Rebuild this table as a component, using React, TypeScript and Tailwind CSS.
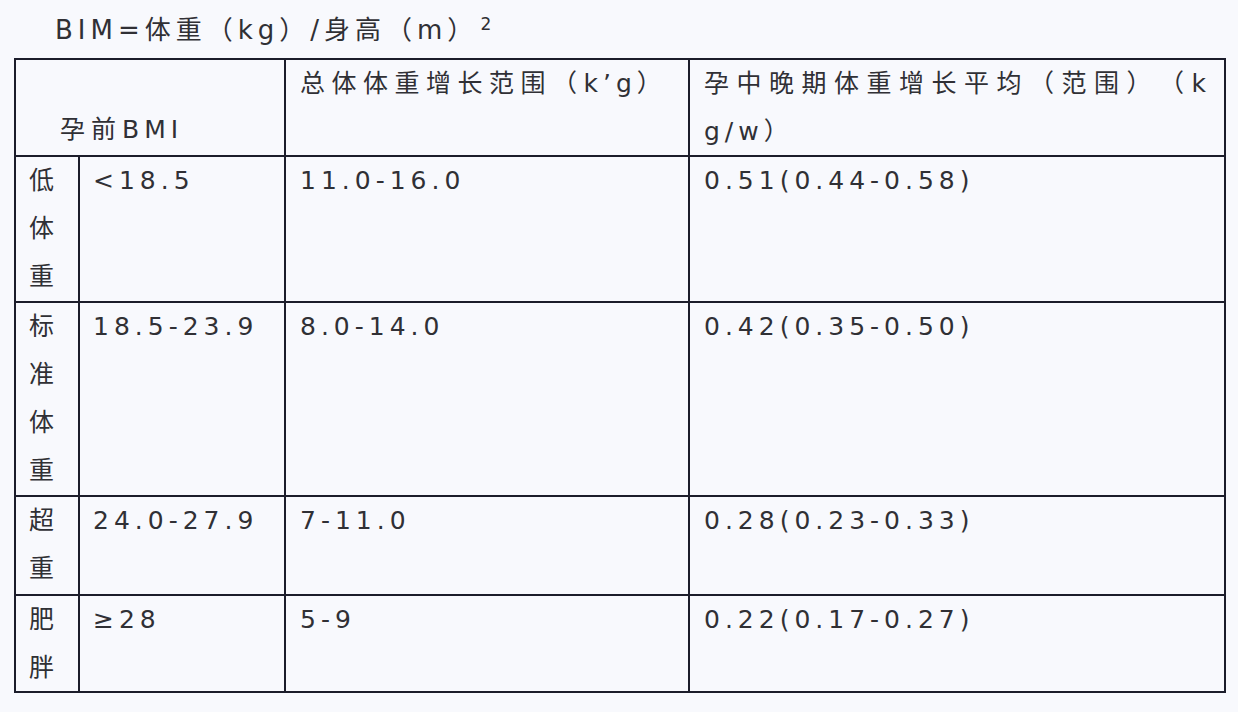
import React from 'react';

const rows = [
    { label: ['低', '体', '重'], bmi: '<18.5', total: '11.0-16.0', weekly: '0.51(0.44-0.58)', h: 'h-[144px]' },
    { label: ['标', '准', '体', '重'], bmi: '18.5-23.9', total: '8.0-14.0', weekly: '0.42(0.35-0.50)', h: 'h-[192px]' },
    { label: ['超', '重'], bmi: '24.0-27.9', total: '7-11.0', weekly: '0.28(0.23-0.33)', h: 'h-[97px]' },
    { label: ['肥', '胖'], bmi: '≥28', total: '5-9', weekly: '0.22(0.17-0.27)', h: 'h-[95px]' },
];

const cell = 'bg-[#f8f9fd] leading-[48px]';

export default function App() {
    return (
        <div
            className="min-h-screen w-[1238px] h-[712px] bg-[#f8f9fd] text-[#303035] text-[25px] tracking-[5px] [text-spacing-trim:space-all]"
            style={{ fontFamily: '"DejaVu Sans", "Noto Sans CJK SC", sans-serif' }}
        >
            <div className="h-[58px] pl-[55px] pt-[12px] leading-[36px] flex items-start text-[26px] tracking-[5px]">
                <span>BIM=体重（kg）/身高（m）</span>
                <span className="text-[17px] leading-none mt-[4px] ml-[2px] tracking-normal">2</span>
            </div>

            <div className="ml-[14px] w-[1212px] bg-[#1c1d2b] p-[2px] grid grid-cols-[62px_204px_402px_534px] gap-[2px]">
                <div className={`${cell} col-span-2 h-[95px] flex items-end pl-[44px] pb-[1px]`}>
                    <span className="tracking-[6px]">孕前</span>BMI
                </div>
                <div className={`${cell} h-[95px] pl-[14px] leading-[46px]`}>
                    <span className="tracking-[6.5px]">总体体重增长范围（</span>k’g
                    <span className="tracking-[6.5px]">）</span>
                </div>
                <div className={`${cell} h-[95px] pl-[14px] leading-[46px]`}>
                    <span className="tracking-[7.5px]">孕中晚期体重增长平均（范围）（</span>k
                    <br />
                    g/w<span>）</span>
                </div>

                {rows.map((r) => (
                    <React.Fragment key={r.bmi}>
                        <div className={`${cell} ${r.h} pl-[13px] flex flex-col`}>
                            {r.label.map((c, i) => (
                                <span key={i}>{c}</span>
                            ))}
                        </div>
                        <div className={`${cell} ${r.h} pl-[13px]`}>{r.bmi}</div>
                        <div className={`${cell} ${r.h} pl-[14px]`}>{r.total}</div>
                        <div className={`${cell} ${r.h} pl-[14px]`}>{r.weekly}</div>
                    </React.Fragment>
                ))}
            </div>
        </div>
    );
}
